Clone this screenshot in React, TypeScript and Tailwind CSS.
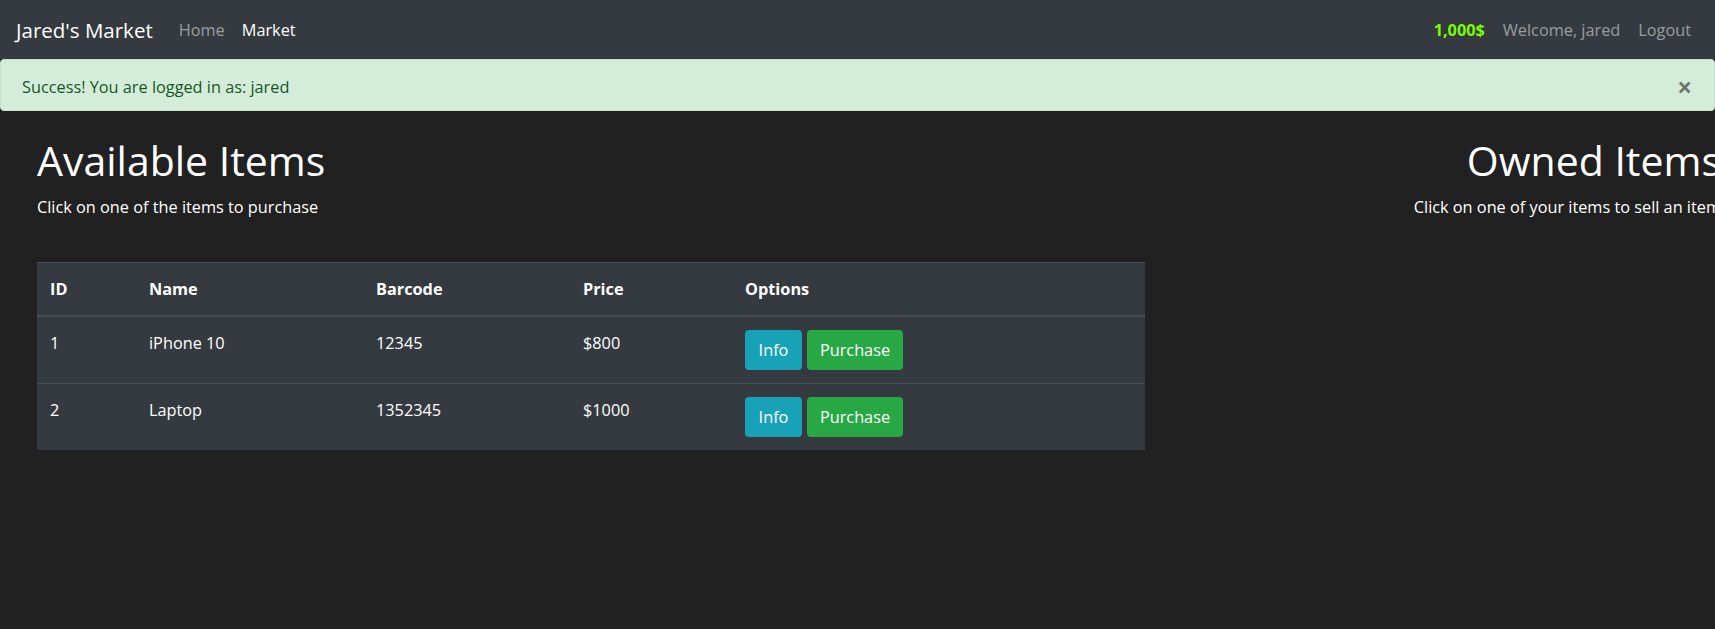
import React from 'react';

interface Item {
    id: number;
    name: string;
    barcode: string;
    price: number;
}

const items: Item[] = [
    { id: 1, name: 'iPhone 10', barcode: '12345', price: 800 },
    { id: 2, name: 'Laptop', barcode: '1352345', price: 1000 },
];

const Navbar: React.FC = () => (
    <nav className="flex h-[59px] items-center bg-[#343a40] px-[16px] pt-[2px]">
        <a className="mr-[26px] text-[20.5px] text-white">Jared's Market</a>
        <div className="flex items-center gap-[17px] text-[16.3px]">
            <a className="text-white/50">Home</a>
            <a className="text-white">Market</a>
        </div>
        <div className="ml-auto flex items-center text-[16.3px]">
            <span className="mr-[18px] font-bold text-[#7cfc00]">1,000$</span>
            <a className="mr-[18px] text-white/50">Welcome, jared</a>
            <a className="mr-[8px] text-white/50">Logout</a>
        </div>
    </nav>
);

const Alert: React.FC = () => (
    <div className="flex h-[52px] items-center rounded-[4px] border border-[#c3e6cb] bg-[#d4edda] px-[21px] pt-[4px] text-[16.3px] text-[#155724]">
        <span>Success! You are logged in as: jared</span>
        <button className="ml-auto mr-[1px] text-[26px] font-bold leading-none text-black/50">×</button>
    </div>
);

const ItemsTable: React.FC = () => (
    <table className="w-[1108px] border-collapse border-t border-[#454d55] bg-[#343a40] text-left text-[16.3px] leading-[26px] text-white">
        <thead>
            <tr className="border-b-2 border-[#454d55]">
                <th className="w-[99px] p-[13px] font-bold">ID</th>
                <th className="w-[227px] p-[13px] font-bold">Name</th>
                <th className="w-[207px] p-[13px] font-bold">Barcode</th>
                <th className="w-[162px] p-[13px] font-bold">Price</th>
                <th className="p-[13px] font-bold">Options</th>
            </tr>
        </thead>
        <tbody>
            {items.map((item, index) => (
                <tr key={item.id} className={index > 0 ? 'border-t border-[#454d55]' : ''}>
                    <td className="p-[13px] align-top">{item.id}</td>
                    <td className="p-[13px] align-top">{item.name}</td>
                    <td className="p-[13px] align-top">{item.barcode}</td>
                    <td className="p-[13px] align-top">${item.price}</td>
                    <td className="p-[13px] align-top">
                        <div className="flex gap-[5px]">
                            <button className="h-[40px] w-[57px] rounded-[4px] bg-[#17a2b8] text-white">Info</button>
                            <button className="h-[40px] w-[96px] rounded-[4px] bg-[#28a745] text-white">Purchase</button>
                        </div>
                    </td>
                </tr>
            ))}
        </tbody>
    </table>
);

export default function App() {
    return (
        <div className="min-h-screen w-full overflow-hidden bg-[#212121] font-['Open_Sans',sans-serif] leading-[1.5]">
            <Navbar />
            <Alert />
            <main className="flex w-[1721px] pl-[37px]">
                <section>
                    <h1 className="mt-[25px] mb-[9px] text-[41px] leading-[1.2] text-white">Available Items</h1>
                    <p className="text-[16.3px] leading-[26px] text-white">Click on one of the items to purchase</p>
                    <div className="mt-[42px]">
                        <ItemsTable />
                    </div>
                </section>
                <section className="flex-1 text-right">
                    <h1 className="mt-[25px] mb-[9px] text-[41px] leading-[1.2] text-white">Owned Items</h1>
                    <p className="text-[16.3px] leading-[26px] text-white">Click on one of your items to sell an item</p>
                </section>
            </main>
        </div>
    );
}
